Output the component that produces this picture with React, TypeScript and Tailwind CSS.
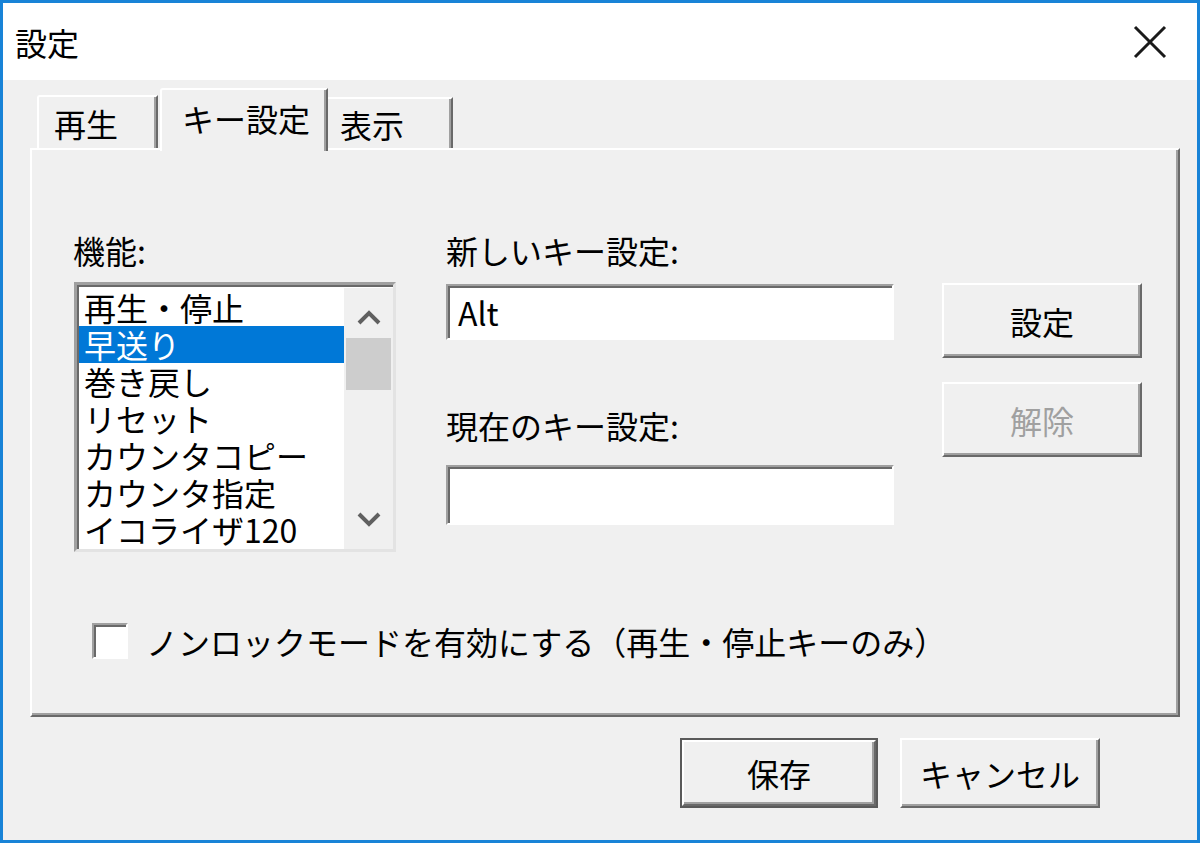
const items = [
  "再生・停止",
  "早送り",
  "巻き戻し",
  "リセット",
  "カウンタコピー",
  "カウンタ指定",
  "イコライザ120",
];

function Chevron({ up }: { up?: boolean }) {
  return (
    <svg width="24" height="16" viewBox="0 0 24 16">
      <polyline
        points={up ? "2,14 12,4 22,14" : "2,2 12,12 22,2"}
        fill="none"
        stroke="#606060"
        strokeWidth="4"
      />
    </svg>
  );
}

function Button({
  label,
  disabled,
  className,
}: {
  label: string;
  disabled?: boolean;
  className?: string;
}) {
  return (
    <div
      className={`flex items-center justify-center border-t-2 border-l-2 border-white border-r-2 border-b-2 border-r-[#696969] border-b-[#696969] bg-[#f0f0f0] shadow-[inset_-2px_-2px_0_#a0a0a0] ${
        disabled ? "text-[#a0a0a0]" : "text-black"
      } ${className || ""}`}
    >
      {label}
    </div>
  );
}

function Field({ value, className }: { value?: string; className?: string }) {
  return (
    <div
      className={`flex items-center bg-white border-t-2 border-l-2 border-[#a0a0a0] border-r-2 border-b-2 border-r-white border-b-white shadow-[inset_2px_2px_0_#696969] pl-[10px] ${className || ""}`}
    >
      {value}
    </div>
  );
}

export default function App() {
  return (
    <div className="w-[1200px] h-[843px] border-[3px] border-[#1883d7] bg-[#f0f0f0] flex flex-col font-['Noto_Sans_CJK_JP',sans-serif] text-[32px] text-black overflow-hidden">
      {/* Title bar */}
      <div className="h-[77px] bg-white flex items-center justify-between pl-[12px] pr-[30px] shrink-0">
        <span className="leading-none">設定</span>
        <svg width="34" height="34" viewBox="0 0 34 34">
          <path d="M2 2 L32 32 M32 2 L2 32" stroke="#1a1a1a" strokeWidth="3" />
        </svg>
      </div>

      {/* Body */}
      <div className="flex-1 pl-[27px] pt-[8px]">
        {/* Tabs */}
        <div className="flex items-end h-[60px] pl-[7px]">
          <div className="w-[121px] h-[53px] flex items-center pl-[15px] border-t-2 border-l-2 border-white border-r-2 border-r-[#696969] shadow-[inset_-2px_0_0_#a0a0a0] rounded-tl-[3px]">
            再生
          </div>
          <div className="relative z-10 ml-[2px] -mb-[3px] w-[168px] h-[63px] flex items-center pl-[20px] pb-[6px] bg-[#f0f0f0] border-t-2 border-l-2 border-white border-r-2 border-r-[#696969] shadow-[inset_-2px_0_0_#a0a0a0] rounded-tl-[3px]">
            キー設定
          </div>
          <div className="w-[125px] h-[51px] flex items-center pl-[12px] border-t-2 border-white border-r-2 border-r-[#696969] shadow-[inset_-2px_0_0_#a0a0a0]">
            表示
          </div>
        </div>

        {/* Panel */}
        <div className="w-[1150px] h-[569px] border-t-2 border-l-2 border-white border-r-2 border-b-2 border-r-[#696969] border-b-[#696969] shadow-[inset_-2px_-2px_0_#a0a0a0] pl-[42px] pt-[80px]">
          <div className="flex">
            {/* Function list */}
            <div className="w-[322px]">
              <div className="h-[40px] leading-[40px] -ml-[1px]">機能:</div>
              <div className="mt-[12px] h-[270px] flex border-t-[3px] border-l-[3px] border-[#a0a0a0] border-r-[3px] border-b-[3px] border-r-[#e3e3e3] border-b-[#e3e3e3] shadow-[inset_2px_2px_0_#696969] bg-white pt-[3px] pl-[2px]">
                <div className="flex-1 pt-[1px]">
                  {items.map((item, i) => (
                    <div
                      key={item}
                      className={`h-[37px] leading-[37px] pl-[5px] whitespace-nowrap ${
                        i === 1 ? "bg-[#0078d7] text-white" : ""
                      }`}
                    >
                      {item}
                    </div>
                  ))}
                </div>
                <div className="w-[49px] bg-[#f0f0f0] flex flex-col items-center">
                  <div className="h-[50px] w-full flex items-center justify-center pt-[8px]">
                    <Chevron up />
                  </div>
                  <div className="h-[52px] w-[45px] bg-[#cdcdcd]" />
                  <div className="flex-1" />
                  <div className="h-[48px] w-full flex items-center justify-center pb-[10px]">
                    <Chevron />
                  </div>
                </div>
              </div>
            </div>

            {/* Key fields */}
            <div className="ml-[50px] w-[448px]">
              <div className="h-[40px] leading-[40px]">新しいキー設定:</div>
              <Field value="Alt" className="mt-[14px] h-[56px]" />
              <div className="mt-[65px] h-[40px] leading-[40px]">現在のキー設定:</div>
              <Field className="mt-[20px] h-[60px]" />
            </div>

            {/* Action buttons */}
            <div className="ml-[48px] w-[200px] pt-[53px] flex flex-col gap-[24px]">
              <Button label="設定" className="h-[75px]" />
              <Button label="解除" disabled className="h-[75px]" />
            </div>
          </div>

          {/* Non-lock checkbox */}
          <div className="mt-[69px] ml-[18px] h-[40px] flex items-center">
            <div className="w-[36px] h-[36px] bg-white border-t-2 border-l-2 border-[#a0a0a0] border-r-2 border-b-2 border-r-white border-b-white shadow-[inset_2px_2px_0_#696969]" />
            <span className="ml-[18px] whitespace-nowrap">ノンロックモードを有効にする（再生・停止キーのみ）</span>
          </div>
        </div>

        {/* Footer buttons */}
        <div className="flex justify-end gap-[22px] mt-[21px] pr-[97px]">
          <div className="w-[198px] h-[70px] border-2 border-[#5a5a5a]">
            <Button label="保存" className="h-full" />
          </div>
          <Button label="キャンセル" className="w-[200px] h-[70px]" />
        </div>
      </div>
    </div>
  );
}
